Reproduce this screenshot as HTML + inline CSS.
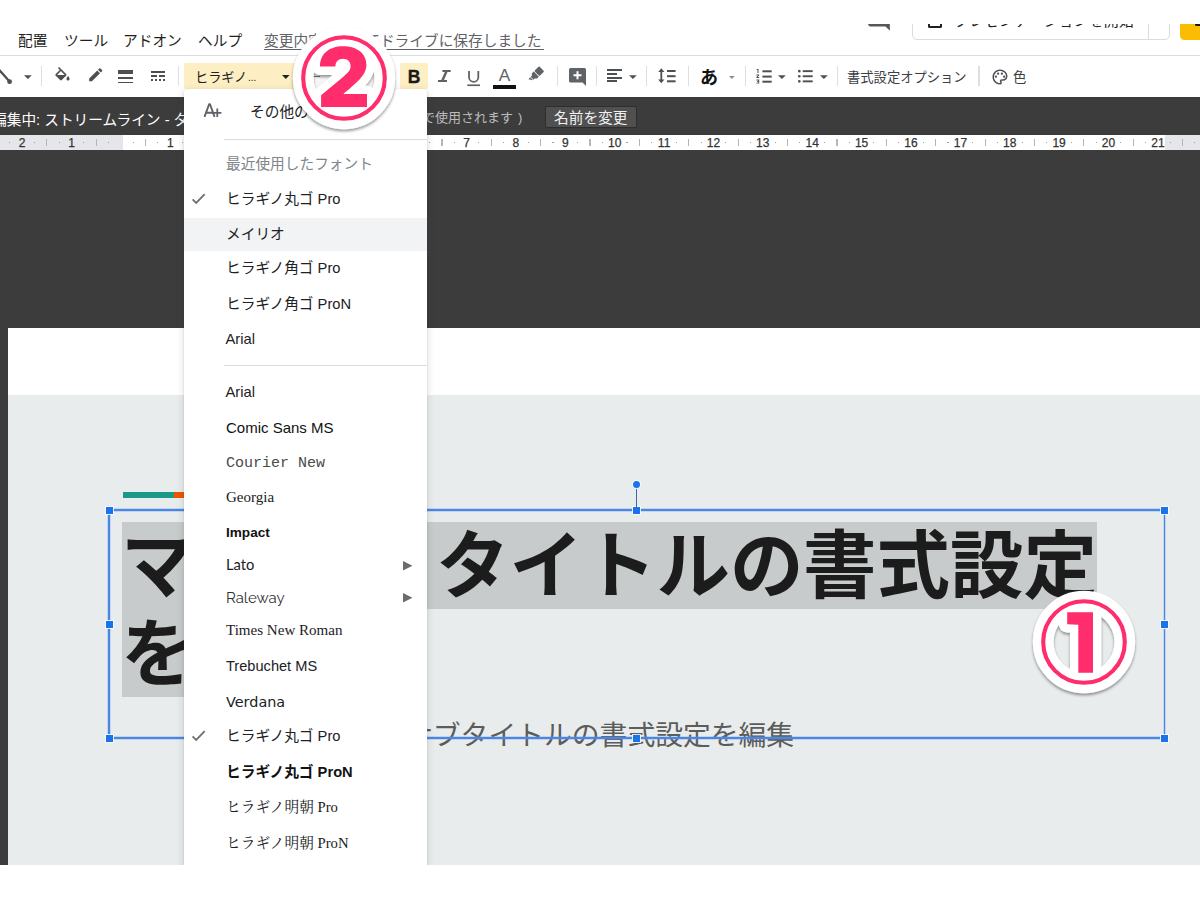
<!DOCTYPE html>
<html lang="ja"><head><meta charset="utf-8"><title>Google Slides - font menu</title>
<style>
html,body{margin:0;padding:0;background:#fff}
body{width:1200px;height:906px;position:relative;overflow:hidden;font-family:"Liberation Sans",sans-serif;color:#202124}
.a{position:absolute}
svg.t{position:absolute;overflow:visible}
svg.t text{font-family:"Liberation Sans","Noto Sans CJK JP",sans-serif;white-space:pre}
svg.i{position:absolute;overflow:visible}
.fi{position:absolute;left:226px;white-space:nowrap;font-size:14.7px;line-height:20px;color:#202124}
.rn{position:absolute;top:135.6px;height:14px;line-height:14px;font-size:12px;color:#333;-webkit-text-stroke:.25px #333;transform:translateX(-50%);white-space:nowrap}
</style></head><body>

<div style="position:absolute;left:0px;top:150px;width:1200px;height:178px;background:#3c3c3c;"></div>
<div style="position:absolute;left:0px;top:328px;width:8px;height:537px;background:#3c3c3c;"></div>
<div style="position:absolute;left:8px;top:328px;width:1192px;height:67px;background:#fff;"></div>
<div style="position:absolute;left:8px;top:394.5px;width:1192px;height:470.5px;background:#e9eced;"></div>
<div style="position:absolute;left:122.5px;top:491.5px;width:51.5px;height:6.5px;background:#1a9988;"></div>
<div style="position:absolute;left:174px;top:491.5px;width:30px;height:6.5px;background:#eb5600;"></div>
<div style="position:absolute;left:121.5px;top:522.3px;width:975.5px;height:87.2px;background:#c8cbcc;"></div>
<div style="position:absolute;left:121.5px;top:609.3px;width:230px;height:87.7px;background:#c8cbcc;"></div>
<svg class="t" style="left:120.8px;top:592px" width="1" height="1"><text x="0" y="0" font-size="73.5" font-weight="bold" fill="#1c1c1c">マスター</text></svg>
<svg class="t" style="left:435.8px;top:592px" width="1" height="1"><text x="0" y="0" font-size="73.5" font-weight="bold" fill="#1c1c1c">タイトルの</text></svg>
<svg class="t" style="left:802.8px;top:592px" width="1" height="1"><text x="0" y="0" font-size="73.5" font-weight="bold" fill="#1c1c1c">書式設定</text></svg>
<svg class="t" style="left:120.8px;top:679.5px" width="1" height="1"><text x="0" y="0" font-size="73.5" font-weight="bold" fill="#1c1c1c">を編集</text></svg>
<svg class="t" style="left:404.9px;top:745px" width="1" height="1"><text x="0" y="0" font-size="27.8" fill="#5c5c5c">サブタイトルの書式設定を編集</text></svg>
<div style="position:absolute;left:109.0px;top:508.35px;width:1055.5px;height:3.5px;background:rgba(90,150,255,.28);"></div><div style="position:absolute;left:109.0px;top:509.3px;width:1055.5px;height:1.6px;background:#4d86dc;"></div>
<div style="position:absolute;left:109.0px;top:736.35px;width:1055.5px;height:3.5px;background:rgba(90,150,255,.28);"></div><div style="position:absolute;left:109.0px;top:737.3px;width:1055.5px;height:1.6px;background:#4d86dc;"></div>
<div style="position:absolute;left:107.25px;top:510.1px;width:3.5px;height:228.0px;background:rgba(90,150,255,.28);"></div><div style="position:absolute;left:108.2px;top:510.1px;width:1.6px;height:228.0px;background:#4d86dc;"></div>
<div style="position:absolute;left:1162.75px;top:510.1px;width:3.5px;height:228.0px;background:rgba(90,150,255,.28);"></div><div style="position:absolute;left:1163.7px;top:510.1px;width:1.6px;height:228.0px;background:#4d86dc;"></div>
<div style="position:absolute;left:105.5px;top:506.6px;width:7.0px;height:7.0px;background:#1a73e8;box-shadow:0 0 0 1px rgba(250,252,255,.85)"></div>
<div style="position:absolute;left:105.5px;top:734.6px;width:7.0px;height:7.0px;background:#1a73e8;box-shadow:0 0 0 1px rgba(250,252,255,.85)"></div>
<div style="position:absolute;left:632.7px;top:506.6px;width:7.0px;height:7.0px;background:#1a73e8;box-shadow:0 0 0 1px rgba(250,252,255,.85)"></div>
<div style="position:absolute;left:632.7px;top:734.6px;width:7.0px;height:7.0px;background:#1a73e8;box-shadow:0 0 0 1px rgba(250,252,255,.85)"></div>
<div style="position:absolute;left:1161.0px;top:506.6px;width:7.0px;height:7.0px;background:#1a73e8;box-shadow:0 0 0 1px rgba(250,252,255,.85)"></div>
<div style="position:absolute;left:1161.0px;top:734.6px;width:7.0px;height:7.0px;background:#1a73e8;box-shadow:0 0 0 1px rgba(250,252,255,.85)"></div>
<div style="position:absolute;left:105.5px;top:620.6px;width:7.0px;height:7.0px;background:#1a73e8;box-shadow:0 0 0 1px rgba(250,252,255,.85)"></div>
<div style="position:absolute;left:1161.0px;top:620.6px;width:7.0px;height:7.0px;background:#1a73e8;box-shadow:0 0 0 1px rgba(250,252,255,.85)"></div>
<div style="position:absolute;left:635.65px;top:487px;width:1.1px;height:20px;background:#3f66b5;"></div>
<div class="a" style="left:632.50px;top:480.800px;width:7.400px;height:7.400px;border-radius:50%;background:#1a73e8;box-shadow:0 0 0 1px rgba(250,252,255,.85)"></div>
<div style="position:absolute;left:0px;top:0px;width:1200px;height:55px;background:#fff;"></div>
<div style="position:absolute;left:0px;top:54.9px;width:1200px;height:1.2px;background:#dadce0;"></div>
<svg class="t" style="left:18.3px;top:46.4px" width="1" height="1"><text x="0" y="0" font-size="14.7" fill="#1f1f1f">配置</text></svg>
<svg class="t" style="left:63.5px;top:46.4px" width="1" height="1"><text x="0" y="0" font-size="14.7" fill="#1f1f1f">ツール</text></svg>
<svg class="t" style="left:122.5px;top:46.4px" width="1" height="1"><text x="0" y="0" font-size="14.7" fill="#1f1f1f">アドオン</text></svg>
<svg class="t" style="left:198px;top:46.4px" width="1" height="1"><text x="0" y="0" font-size="14.7" fill="#1f1f1f">ヘルプ</text></svg>
<svg class="t" style="left:264px;top:46.4px" width="1" height="1"><text x="0" y="0" font-size="14.7" fill="#5f6368">変更内容をすべてドライブに保存しました</text></svg>
<div style="position:absolute;left:264px;top:48.6px;width:280px;height:1px;background:#5f6368;"></div>
<svg class="t" style="left:-12.7px;top:46.4px" width="1" height="1"><text x="0" y="0" font-size="14.7" fill="#1f1f1f">ド</text></svg>
<div class="a" style="left:0;top:24.1px;width:1200px;height:28px;overflow:hidden">
<svg class="i" style="left:866px;top:-16.9px" width="26" height="26" viewBox="0 0 24 24"><path fill="#54585d" d="M20 2H4c-1.100 0-2 .9-2 2v12c0 1.100.9 2 2 2h14l4 4V4c0-1.100-.9-2-2-2z"/></svg>
<div class="a" style="left:912px;top:-23.0px;width:258px;height:38.500px;border:1.200px solid #dadce0;border-radius:5px;box-sizing:border-box;background:#fff"></div>
<div style="position:absolute;left:1148px;top:-23.0px;width:1.2px;height:38px;background:#dadce0;"></div>
<div class="a" style="left:927.500px;top:-9.9px;width:14.800px;height:13.500px;border:2px solid #202124;border-radius:1.500px;box-sizing:border-box"></div>
<svg class="t" style="left:954.3px;top:1.5px" width="1" height="1"><text x="0" y="0" font-size="15" fill="#202124">プレゼンテーションを開始</text></svg>
<div class="a" style="left:1179.500px;top:-22.9px;width:40px;height:38.500px;border-radius:4.500px;background:#fbbc04"></div>
<div class="a" style="left:1195px;top:-10.1px;width:12px;height:12.200px;background:#1b1b1b;border-radius:1.500px"></div>
</div>
<div style="position:absolute;left:0px;top:56.1px;width:1200px;height:40.9px;background:#fff;"></div>
<div style="position:absolute;left:41.099999999999994px;top:65.5px;width:1.4px;height:20.5px;background:#dddfe2;"></div>
<div style="position:absolute;left:177.8px;top:65.5px;width:1.4px;height:20.5px;background:#dddfe2;"></div>
<div style="position:absolute;left:557.0px;top:65.5px;width:1.4px;height:20.5px;background:#dddfe2;"></div>
<div style="position:absolute;left:595.8px;top:65.5px;width:1.4px;height:20.5px;background:#dddfe2;"></div>
<div style="position:absolute;left:646.0999999999999px;top:65.5px;width:1.4px;height:20.5px;background:#dddfe2;"></div>
<div style="position:absolute;left:688.0999999999999px;top:65.5px;width:1.4px;height:20.5px;background:#dddfe2;"></div>
<div style="position:absolute;left:745.0px;top:65.5px;width:1.4px;height:20.5px;background:#dddfe2;"></div>
<div style="position:absolute;left:837.0px;top:65.5px;width:1.4px;height:20.5px;background:#dddfe2;"></div>
<div style="position:absolute;left:978.3px;top:65.5px;width:1.4px;height:20.5px;background:#dddfe2;"></div>
<svg class="i" style="left:0;top:66px" width="14" height="20"><path d="M-2 2.500L9.300 15.300" stroke="#4d5053" stroke-width="2.300" fill="none"/><circle cx="9.600" cy="15.700" r="2.400" fill="#4d5053"/></svg>
<svg class="i" style="left:24.2px;top:75.2px" width="7.8" height="4.3" viewBox="0 0 10 5"><path fill="#4d5053" d="M0 0h10L5 5z"/></svg>
<svg class="i" style="left:53px;top:67.300px" width="19" height="19" viewBox="0 0 24 24"><path fill="#4d5053" d="M16.560 8.940L7.620 0 6.210 1.410l2.380 2.380-5.150 5.150c-.59.590-.59 1.540 0 2.120l5.500 5.500c.29.290.68.440 1.060.440s.77-.15 1.060-.440l5.500-5.500c.59-.58.59-1.530 0-2.120zM5.210 10L10 5.210 14.790 10H5.210zM19 11.500s-2 2.170-2 3.500c0 1.100.9 2 2 2s2-.9 2-2c0-1.330-2-3.500-2-3.500z"/></svg>
<svg class="i" style="left:86.700px;top:66px" width="17.500" height="17.500" viewBox="0 0 24 24"><path fill="#4d5053" d="M3 17.250V21h3.750L17.810 9.940l-3.750-3.750L3 17.250zM20.710 7.040c.39-.39.39-1.020 0-1.410l-2.340-2.340c-.39-.39-1.020-.39-1.410 0l-1.830 1.830 3.750 3.750 1.830-1.830z"/></svg>
<div style="position:absolute;left:117.5px;top:70.3px;width:15.3px;height:4.2px;background:#4d5053;"></div>
<div style="position:absolute;left:117.5px;top:76.8px;width:15.3px;height:2.6px;background:#4d5053;"></div>
<div style="position:absolute;left:117.5px;top:81.7px;width:15.3px;height:1.1px;background:#4d5053;"></div>
<div style="position:absolute;left:150.5px;top:70.8px;width:14.7px;height:2.1px;background:#4d5053;"></div>
<div style="position:absolute;left:150.5px;top:75.3px;width:6.2px;height:2.1px;background:#4d5053;"></div>
<div style="position:absolute;left:159.0px;top:75.3px;width:6.2px;height:2.1px;background:#4d5053;"></div>
<div style="position:absolute;left:150.5px;top:79.4px;width:2.3px;height:2.1px;background:#4d5053;"></div>
<div style="position:absolute;left:154.7px;top:79.4px;width:2.3px;height:2.1px;background:#4d5053;"></div>
<div style="position:absolute;left:158.9px;top:79.4px;width:2.3px;height:2.1px;background:#4d5053;"></div>
<div style="position:absolute;left:163.1px;top:79.4px;width:2.3px;height:2.1px;background:#4d5053;"></div>
<div class="a" style="left:184.2px;top:63px;width:116px;height:25.5px;background:#fdefc3;border-radius:2px"></div>
<svg class="t" style="left:194.6px;top:81.6px" width="1" height="1"><text x="0" y="0" font-size="13.2" fill="#202124">ヒラギノ</text></svg>
<svg class="t" style="left:248.3px;top:81.4px" width="1" height="1"><text x="0" y="0" font-size="10" fill="#202124">...</text></svg>
<svg class="i" style="left:281.7px;top:75.2px" width="7.6" height="4" viewBox="0 0 10 5"><path fill="#202124" d="M0 0h10L5 5z"/></svg>
<div style="position:absolute;left:313px;top:77px;width:11px;height:1.6px;background:#bbb;"></div>
<svg class="i" style="left:363px;top:76.5px" width="7" height="3.6" viewBox="0 0 10 5"><path fill="#999" d="M0 0h10L5 5z"/></svg>
<div class="a" style="left:400px;top:63px;width:28px;height:26px;background:#fdefc3;border-radius:2px"></div>
<div class="a" style="left:406px;top:66.700px;width:16px;height:20px;line-height:20px;font-size:17.500px;font-weight:bold;color:#1a1a1a;-webkit-text-stroke:.35px #1a1a1a;text-align:center">B</div>
<svg class="i" style="left:436px;top:70.400px" width="16" height="13"><path fill="#5f6368" d="M6.400 0h8.300v2H11.500L8 10h3v2H2v-2H5.300L8.800 2H6.400z"/></svg>
<svg class="i" style="left:467px;top:70.700px" width="13" height="16"><path fill="none" stroke="#5f6368" stroke-width="1.800" d="M2 0v6.200a4.650 4.650 0 0 0 9.300 0V0"/><rect x="0.300" y="13.400" width="12.700" height="1.700" fill="#5f6368"/></svg>
<div class="a" style="left:494.400px;top:64.500px;width:20px;height:20px;line-height:20px;font-size:17.300px;color:#5f6368;text-align:center">A</div>
<div style="position:absolute;left:493.3px;top:85.3px;width:22.4px;height:3.4px;background:#111;"></div>
<svg class="i" style="left:526px;top:65px" width="20" height="20"><g fill="#5f6368" transform="translate(10.400 9) rotate(45) scale(.9)"><rect x="-4" y="-8.300" width="8" height="7.600" rx="1"/><path d="M-4 0.200H4V3L2.200 5V6.700H-2.200V5L-4 3z"/><path d="M-2.200 7.500H2.200L-2.200 10.300z"/></g></svg>
<svg class="i" style="left:568.500px;top:67.500px" width="17" height="18"><path fill="#5f6368" d="M1.600 0h13.800A1.600 1.600 0 0 1 17 1.600V18l-3.400-3.400H1.600A1.600 1.600 0 0 1 0 13V1.600A1.600 1.600 0 0 1 1.600 0z"/><path fill="#fff" d="M7.500 3.300h2v3h3v2h-3v3h-2v-3h-3v-2h3z"/></svg>
<div style="position:absolute;left:606.7px;top:69.2px;width:15px;height:2px;background:#4d5053;"></div>
<div style="position:absolute;left:606.7px;top:72.95px;width:10.3px;height:2px;background:#4d5053;"></div>
<div style="position:absolute;left:606.7px;top:76.7px;width:15px;height:2px;background:#4d5053;"></div>
<div style="position:absolute;left:606.7px;top:80.45px;width:10.3px;height:2px;background:#4d5053;"></div>
<svg class="i" style="left:629px;top:75.2px" width="7.8" height="4.3" viewBox="0 0 10 5"><path fill="#4d5053" d="M0 0h10L5 5z"/></svg>
<svg class="i" style="left:657.400px;top:68px" width="21" height="16"><path fill="#4d5053" d="M4.300 0.300L7.400 3.900H5.200v7.700H7.400L4.300 15.200 1.200 11.600H3.400V3.900H1.200z"/><rect x="10" y="2" width="8.600" height="2" fill="#4d5053"/><rect x="10" y="7.200" width="8.600" height="2" fill="#4d5053"/><rect x="10" y="12.300" width="8.600" height="2" fill="#4d5053"/></svg>
<svg class="t" style="left:699.8px;top:84.4px" width="1" height="1"><text x="0" y="0" font-size="18" font-weight="bold" fill="#111">あ</text></svg>
<svg class="i" style="left:729.2px;top:76.3px" width="5.8" height="3" viewBox="0 0 10 5"><path fill="#8a8f94" d="M0 0h10L5 5z"/></svg>
<svg class="i" style="left:756px;top:68.500px" width="16" height="15"><g fill="#4d5053"><rect x="6.400" y="1.300" width="9.300" height="2"/><rect x="6.400" y="6.600" width="9.300" height="2"/><rect x="6.400" y="11.700" width="9.300" height="2"/><path d="M0.700 0h1.800v4H1.500V1H0.700zM0.400 5.400h2.800v.9L1.700 8h1.500v1H0.400v-.9l1.500-1.700H0.400zM0.400 10.600h2.800v4H0.400v-.9h1.800v-.7H1.200v-.9h1v-.6H0.400z"/></g></svg>
<svg class="i" style="left:777.5px;top:75.2px" width="7.8" height="4.3" viewBox="0 0 10 5"><path fill="#4d5053" d="M0 0h10L5 5z"/></svg>
<svg class="i" style="left:798px;top:68.500px" width="16" height="15"><g fill="#4d5053"><rect x="4.700" y="1.200" width="10" height="1.900"/><rect x="4.700" y="6.300" width="10" height="1.900"/><rect x="4.700" y="11.400" width="10" height="1.900"/><circle cx="1.300" cy="2.150" r="1.300"/><circle cx="1.300" cy="7.250" r="1.300"/><circle cx="1.300" cy="12.350" r="1.300"/></g></svg>
<svg class="i" style="left:820px;top:75.2px" width="7.8" height="4.3" viewBox="0 0 10 5"><path fill="#4d5053" d="M0 0h10L5 5z"/></svg>
<svg class="t" style="left:847.1px;top:81.5px" width="1" height="1"><text x="0" y="0" font-size="13.3" fill="#3c4043">書式設定オプション</text></svg>
<svg class="i" style="left:990.500px;top:68.200px" width="18" height="18" viewBox="0 0 24 24"><path fill="#4d5053" d="M12 22C6.490 22 2 17.510 2 12S6.490 2 12 2s10 4.040 10 9c0 3.310-2.690 6-6 6h-1.770c-.28 0-.5.220-.5.500 0 .12.050.23.130.33.410.47.640 1.060.640 1.670A2.500 2.500 0 0 1 12 22zm0-18c-4.410 0-8 3.590-8 8s3.590 8 8 8c.28 0 .5-.22.5-.5a.54.54 0 0 0-.14-.35c-.41-.46-.63-1.050-.63-1.650a2.500 2.500 0 0 1 2.500-2.500H16c2.210 0 4-1.790 4-4 0-3.860-3.590-7-8-7z"/><circle fill="#4d5053" cx="6.500" cy="11.500" r="1.500"/><circle fill="#4d5053" cx="9.500" cy="7.500" r="1.500"/><circle fill="#4d5053" cx="14.500" cy="7.500" r="1.500"/><circle fill="#4d5053" cx="17.500" cy="11.500" r="1.500"/></svg>
<svg class="t" style="left:1012.9px;top:81.5px" width="1" height="1"><text x="0" y="0" font-size="13.3" fill="#3c4043">色</text></svg>
<div style="position:absolute;left:0px;top:97px;width:1200px;height:38.3px;background:#3c3c3c;"></div>
<svg class="t" style="left:-7.7px;top:125.2px" width="1" height="1"><text x="0" y="0" font-size="14.7" fill="#fff">編集中: ストリームライン - タ</text></svg>
<svg class="t" style="left:421.9px;top:121.9px" width="1" height="1"><text x="0" y="0" font-size="13" fill="#bdbdbd">で使用されます</text></svg>
<svg class="t" style="left:517.8px;top:121.9px" width="1" height="1"><text x="0" y="0" font-size="13" fill="#bdbdbd">)</text></svg>
<div class="a" style="left:544.5px;top:105.7px;width:92px;height:22.5px;background:#505050;border:1px solid #2e2e2e;border-radius:2px;box-sizing:border-box"></div>
<svg class="t" style="left:554px;top:122.5px" width="1" height="1"><text x="0" y="0" font-size="14.7" fill="#f1f1f1">名前を変更</text></svg>
<div style="position:absolute;left:0px;top:135.3px;width:1200px;height:14.4px;background:#fff;"></div>
<div style="position:absolute;left:0px;top:135.3px;width:123px;height:14.4px;background:#e4e6ea;"></div>
<div style="position:absolute;left:1164.5px;top:135.3px;width:35.5px;height:14.4px;background:#e4e6ea;"></div>
<div style="position:absolute;left:-3.2px;top:138.8px;width:1.3px;height:7.2px;background:#b4b6ba;"></div>
<div style="position:absolute;left:-15.5px;top:141.8px;width:1.2px;height:1.6px;background:#9aa0a6;"></div>
<div style="position:absolute;left:9.2px;top:141.8px;width:1.2px;height:1.6px;background:#9aa0a6;"></div>
<div class="rn" style="left:22.1px">2</div>
<div style="position:absolute;left:46.2px;top:138.8px;width:1.3px;height:7.2px;background:#b4b6ba;"></div>
<div style="position:absolute;left:33.9px;top:141.8px;width:1.2px;height:1.6px;background:#9aa0a6;"></div>
<div style="position:absolute;left:58.6px;top:141.8px;width:1.2px;height:1.6px;background:#9aa0a6;"></div>
<div class="rn" style="left:71.5px">1</div>
<div style="position:absolute;left:95.6px;top:138.8px;width:1.3px;height:7.2px;background:#b4b6ba;"></div>
<div style="position:absolute;left:83.3px;top:141.8px;width:1.2px;height:1.6px;background:#9aa0a6;"></div>
<div style="position:absolute;left:108.0px;top:141.8px;width:1.2px;height:1.6px;background:#9aa0a6;"></div>
<div style="position:absolute;left:145.0px;top:138.8px;width:1.3px;height:7.2px;background:#b4b6ba;"></div>
<div style="position:absolute;left:132.6px;top:141.8px;width:1.2px;height:1.6px;background:#9aa0a6;"></div>
<div style="position:absolute;left:157.3px;top:141.8px;width:1.2px;height:1.6px;background:#9aa0a6;"></div>
<div class="rn" style="left:170.3px">1</div>
<div style="position:absolute;left:194.4px;top:138.8px;width:1.3px;height:7.2px;background:#b4b6ba;"></div>
<div style="position:absolute;left:182.0px;top:141.8px;width:1.2px;height:1.6px;background:#9aa0a6;"></div>
<div style="position:absolute;left:206.7px;top:141.8px;width:1.2px;height:1.6px;background:#9aa0a6;"></div>
<div class="rn" style="left:219.7px">2</div>
<div style="position:absolute;left:243.8px;top:138.8px;width:1.3px;height:7.2px;background:#b4b6ba;"></div>
<div style="position:absolute;left:231.4px;top:141.8px;width:1.2px;height:1.6px;background:#9aa0a6;"></div>
<div style="position:absolute;left:256.1px;top:141.8px;width:1.2px;height:1.6px;background:#9aa0a6;"></div>
<div class="rn" style="left:269.0px">3</div>
<div style="position:absolute;left:293.1px;top:138.8px;width:1.3px;height:7.2px;background:#b4b6ba;"></div>
<div style="position:absolute;left:280.8px;top:141.8px;width:1.2px;height:1.6px;background:#9aa0a6;"></div>
<div style="position:absolute;left:305.5px;top:141.8px;width:1.2px;height:1.6px;background:#9aa0a6;"></div>
<div class="rn" style="left:318.4px">4</div>
<div style="position:absolute;left:342.5px;top:138.8px;width:1.3px;height:7.2px;background:#b4b6ba;"></div>
<div style="position:absolute;left:330.2px;top:141.8px;width:1.2px;height:1.6px;background:#9aa0a6;"></div>
<div style="position:absolute;left:354.9px;top:141.8px;width:1.2px;height:1.6px;background:#9aa0a6;"></div>
<div class="rn" style="left:367.8px">5</div>
<div style="position:absolute;left:391.9px;top:138.8px;width:1.3px;height:7.2px;background:#b4b6ba;"></div>
<div style="position:absolute;left:379.5px;top:141.8px;width:1.2px;height:1.6px;background:#9aa0a6;"></div>
<div style="position:absolute;left:404.2px;top:141.8px;width:1.2px;height:1.6px;background:#9aa0a6;"></div>
<div class="rn" style="left:417.2px">6</div>
<div style="position:absolute;left:441.3px;top:138.8px;width:1.3px;height:7.2px;background:#b4b6ba;"></div>
<div style="position:absolute;left:428.9px;top:141.8px;width:1.2px;height:1.6px;background:#9aa0a6;"></div>
<div style="position:absolute;left:453.6px;top:141.8px;width:1.2px;height:1.6px;background:#9aa0a6;"></div>
<div class="rn" style="left:466.6px">7</div>
<div style="position:absolute;left:490.7px;top:138.8px;width:1.3px;height:7.2px;background:#b4b6ba;"></div>
<div style="position:absolute;left:478.3px;top:141.8px;width:1.2px;height:1.6px;background:#9aa0a6;"></div>
<div style="position:absolute;left:503.0px;top:141.8px;width:1.2px;height:1.6px;background:#9aa0a6;"></div>
<div class="rn" style="left:515.9px">8</div>
<div style="position:absolute;left:540.0px;top:138.8px;width:1.3px;height:7.2px;background:#b4b6ba;"></div>
<div style="position:absolute;left:527.7px;top:141.8px;width:1.2px;height:1.6px;background:#9aa0a6;"></div>
<div style="position:absolute;left:552.4px;top:141.8px;width:1.2px;height:1.6px;background:#9aa0a6;"></div>
<div class="rn" style="left:565.3px">9</div>
<div style="position:absolute;left:589.4px;top:138.8px;width:1.3px;height:7.2px;background:#b4b6ba;"></div>
<div style="position:absolute;left:577.1px;top:141.8px;width:1.2px;height:1.6px;background:#9aa0a6;"></div>
<div style="position:absolute;left:601.8px;top:141.8px;width:1.2px;height:1.6px;background:#9aa0a6;"></div>
<div class="rn" style="left:614.7px">10</div>
<div style="position:absolute;left:638.8px;top:138.8px;width:1.3px;height:7.2px;background:#b4b6ba;"></div>
<div style="position:absolute;left:626.4px;top:141.8px;width:1.2px;height:1.6px;background:#9aa0a6;"></div>
<div style="position:absolute;left:651.1px;top:141.8px;width:1.2px;height:1.6px;background:#9aa0a6;"></div>
<div class="rn" style="left:664.1px">11</div>
<div style="position:absolute;left:688.2px;top:138.8px;width:1.3px;height:7.2px;background:#b4b6ba;"></div>
<div style="position:absolute;left:675.8px;top:141.8px;width:1.2px;height:1.6px;background:#9aa0a6;"></div>
<div style="position:absolute;left:700.5px;top:141.8px;width:1.2px;height:1.6px;background:#9aa0a6;"></div>
<div class="rn" style="left:713.5px">12</div>
<div style="position:absolute;left:737.6px;top:138.8px;width:1.3px;height:7.2px;background:#b4b6ba;"></div>
<div style="position:absolute;left:725.2px;top:141.8px;width:1.2px;height:1.6px;background:#9aa0a6;"></div>
<div style="position:absolute;left:749.9px;top:141.8px;width:1.2px;height:1.6px;background:#9aa0a6;"></div>
<div class="rn" style="left:762.8px">13</div>
<div style="position:absolute;left:786.9px;top:138.8px;width:1.3px;height:7.2px;background:#b4b6ba;"></div>
<div style="position:absolute;left:774.6px;top:141.8px;width:1.2px;height:1.6px;background:#9aa0a6;"></div>
<div style="position:absolute;left:799.3px;top:141.8px;width:1.2px;height:1.6px;background:#9aa0a6;"></div>
<div class="rn" style="left:812.2px">14</div>
<div style="position:absolute;left:836.3px;top:138.8px;width:1.3px;height:7.2px;background:#b4b6ba;"></div>
<div style="position:absolute;left:824.0px;top:141.8px;width:1.2px;height:1.6px;background:#9aa0a6;"></div>
<div style="position:absolute;left:848.7px;top:141.8px;width:1.2px;height:1.6px;background:#9aa0a6;"></div>
<div class="rn" style="left:861.6px">15</div>
<div style="position:absolute;left:885.7px;top:138.8px;width:1.3px;height:7.2px;background:#b4b6ba;"></div>
<div style="position:absolute;left:873.3px;top:141.8px;width:1.2px;height:1.6px;background:#9aa0a6;"></div>
<div style="position:absolute;left:898.0px;top:141.8px;width:1.2px;height:1.6px;background:#9aa0a6;"></div>
<div class="rn" style="left:911.0px">16</div>
<div style="position:absolute;left:935.1px;top:138.8px;width:1.3px;height:7.2px;background:#b4b6ba;"></div>
<div style="position:absolute;left:922.7px;top:141.8px;width:1.2px;height:1.6px;background:#9aa0a6;"></div>
<div style="position:absolute;left:947.4px;top:141.8px;width:1.2px;height:1.6px;background:#9aa0a6;"></div>
<div class="rn" style="left:960.4px">17</div>
<div style="position:absolute;left:984.5px;top:138.8px;width:1.3px;height:7.2px;background:#b4b6ba;"></div>
<div style="position:absolute;left:972.1px;top:141.8px;width:1.2px;height:1.6px;background:#9aa0a6;"></div>
<div style="position:absolute;left:996.8px;top:141.8px;width:1.2px;height:1.6px;background:#9aa0a6;"></div>
<div class="rn" style="left:1009.7px">18</div>
<div style="position:absolute;left:1033.8px;top:138.8px;width:1.3px;height:7.2px;background:#b4b6ba;"></div>
<div style="position:absolute;left:1021.5px;top:141.8px;width:1.2px;height:1.6px;background:#9aa0a6;"></div>
<div style="position:absolute;left:1046.2px;top:141.8px;width:1.2px;height:1.6px;background:#9aa0a6;"></div>
<div class="rn" style="left:1059.1px">19</div>
<div style="position:absolute;left:1083.2px;top:138.8px;width:1.3px;height:7.2px;background:#b4b6ba;"></div>
<div style="position:absolute;left:1070.9px;top:141.8px;width:1.2px;height:1.6px;background:#9aa0a6;"></div>
<div style="position:absolute;left:1095.6px;top:141.8px;width:1.2px;height:1.6px;background:#9aa0a6;"></div>
<div class="rn" style="left:1108.5px">20</div>
<div style="position:absolute;left:1132.6px;top:138.8px;width:1.3px;height:7.2px;background:#b4b6ba;"></div>
<div style="position:absolute;left:1120.2px;top:141.8px;width:1.2px;height:1.6px;background:#9aa0a6;"></div>
<div style="position:absolute;left:1144.9px;top:141.8px;width:1.2px;height:1.6px;background:#9aa0a6;"></div>
<div class="rn" style="left:1157.9px">21</div>
<div style="position:absolute;left:1182.0px;top:138.8px;width:1.3px;height:7.2px;background:#b4b6ba;"></div>
<div style="position:absolute;left:1169.6px;top:141.8px;width:1.2px;height:1.6px;background:#9aa0a6;"></div>
<div style="position:absolute;left:1194.3px;top:141.8px;width:1.2px;height:1.6px;background:#9aa0a6;"></div>
<div class="a" style="left:184.3px;top:89px;width:242.7px;height:776px;background:#fff;border-radius:4px 4px 0 0;box-shadow:0 2px 6px 2px rgba(60,64,67,.11),0 1px 2px rgba(60,64,67,.22)"></div>
<svg class="i" style="left:203px;top:102px" width="20" height="16"><path fill="none" stroke="#5f6368" stroke-width="1.900" stroke-linejoin="round" d="M1.500 14.900L6.100 2.200H7L11.600 14.900M3.300 10.700H10"/><path fill="none" stroke="#5f6368" stroke-width="1.800" d="M14.300 6.600V15.100M10 10.800H18.400"/></svg>
<svg class="t" style="left:249.6px;top:117.4px" width="1" height="1"><text x="0" y="0" font-size="14.7" fill="#202124">その他のフォント</text></svg>
<div style="position:absolute;left:224px;top:138.5px;width:203px;height:1px;background:#dadce0;"></div>
<svg class="t" style="left:225.8px;top:168.6px" width="1" height="1"><text x="0" y="0" font-size="14.7" fill="#80868b">最近使用したフォント</text></svg>
<div style="position:absolute;left:184.3px;top:218px;width:242.7px;height:33px;background:#f1f3f4;"></div>
<svg class="i" style="left:192.3px;top:193.3px" width="14" height="12"><path fill="none" stroke="#707070" stroke-width="1.800" d="M0.600 6.300L4.200 9.900L12.700 1.200"/></svg>
<svg class="t" style="left:226px;top:204.3px" width="1" height="1"><text x="0" y="0" font-size="14.7" fill="#202124">ヒラギノ丸ゴ Pro</text></svg>
<svg class="t" style="left:226px;top:238.6px" width="1" height="1"><text x="0" y="0" font-size="14.7" fill="#202124">メイリオ</text></svg>
<svg class="t" style="left:226px;top:273.4px" width="1" height="1"><text x="0" y="0" font-size="14.7" fill="#202124">ヒラギノ角ゴ Pro</text></svg>
<svg class="t" style="left:226px;top:309.2px" width="1" height="1"><text x="0" y="0" font-size="14.7" fill="#202124">ヒラギノ角ゴ ProN</text></svg>
<div class="a" style="left:225.5px;top:329.09px;line-height:20px;font-size:14.74px;white-space:nowrap;font-family:'Liberation Sans',sans-serif;color:#202124;">Arial</div>
<div style="position:absolute;left:224px;top:365.2px;width:203px;height:1px;background:#dadce0;"></div>
<div class="a" style="left:225.5px;top:381.59px;line-height:20px;font-size:14.74px;white-space:nowrap;font-family:'Liberation Sans',sans-serif;color:#202124;">Arial</div>
<svg class="t" style="left:226px;top:432.7px" width="1" height="1"><text x="0" y="0" font-size="15" fill="#111" style="font-family:'Comic Sans MS','Liberation Sans',sans-serif">Comic Sans MS</text></svg>
<div class="a" style="left:226px;top:454.30px;line-height:20px;font-size:15px;white-space:nowrap;font-family:'Liberation Mono',monospace;color:#4a4a4a;">Courier New</div>
<svg class="t" style="left:226px;top:501.5px" width="1" height="1"><text x="0" y="0" font-size="15" fill="#202124" style="font-family:Georgia,'Liberation Serif',serif">Georgia</text></svg>
<svg class="t" style="left:226px;top:537.3px" width="1" height="1"><text x="0" y="0" font-size="13.6" font-weight="bold" fill="#111" style="font-family:Impact,'Liberation Sans',sans-serif">Impact</text></svg>
<svg class="t" style="left:226px;top:570.3px" width="1" height="1"><text x="0" y="0" font-size="14.7" fill="#202124" style="font-family:Lato,'Liberation Sans',sans-serif">Lato</text></svg>
<svg class="t" style="left:226px;top:602.5px" width="1" height="1"><text x="0" y="0" font-size="15" fill="#333" style="font-family:Raleway,'Liberation Sans',sans-serif">Raleway</text></svg>
<div class="a" style="left:226px;top:620.12px;line-height:20px;font-size:15.05px;white-space:nowrap;font-family:'Liberation Serif',serif;color:#202124;">Times New Roman</div>
<svg class="t" style="left:226px;top:670.7px" width="1" height="1"><text x="0" y="0" font-size="14.6" fill="#202124" style="font-family:'Trebuchet MS','Liberation Sans',sans-serif">Trebuchet MS</text></svg>
<svg class="t" style="left:226px;top:706.6px" width="1" height="1"><text x="0" y="0" font-size="14.4" fill="#202124" style="font-family:Verdana,'DejaVu Sans','Liberation Sans',sans-serif">Verdana</text></svg>
<svg class="i" style="left:403.300px;top:560.8px" width="10" height="10"><path fill="#6b6b6b" d="M0 0L9.400 4.700L0 9.400z"/></svg>
<svg class="i" style="left:403.300px;top:592.8px" width="10" height="10"><path fill="#6b6b6b" d="M0 0L9.400 4.700L0 9.400z"/></svg>
<svg class="i" style="left:192.3px;top:730.3px" width="14" height="12"><path fill="none" stroke="#707070" stroke-width="1.800" d="M0.600 6.300L4.200 9.900L12.700 1.200"/></svg>
<svg class="t" style="left:226px;top:741.2px" width="1" height="1"><text x="0" y="0" font-size="14.7" fill="#202124">ヒラギノ丸ゴ Pro</text></svg>
<svg class="t" style="left:226px;top:777.3px" width="1" height="1"><text x="0" y="0" font-size="14.7" font-weight="bold" fill="#111">ヒラギノ丸ゴ ProN</text></svg>
<svg class="t" style="left:226px;top:812.2px" width="1" height="1"><text x="0" y="0" font-size="14.7" fill="#202124" style="font-family:'Liberation Serif','Noto Serif CJK SC',serif">ヒラギノ明朝 Pro</text></svg>
<svg class="t" style="left:226px;top:847.6px" width="1" height="1"><text x="0" y="0" font-size="14.7" fill="#202124" style="font-family:'Liberation Serif','Noto Serif CJK SC',serif">ヒラギノ明朝 ProN</text></svg>
<div style="position:absolute;left:0px;top:865px;width:1200px;height:41px;background:#fff;"></div>
<div style="position:absolute;left:308px;top:72.5px;width:72px;height:16.5px;background:#f6f6f6;"></div>
<div style="position:absolute;left:313px;top:75.6px;width:6.5px;height:1.5px;background:#777;"></div>
<svg class="i" style="left:282px;top:16.400000000000006px" width="124" height="128" viewBox="282 16.400000000000006 124 128"><defs><filter id="shb2" x="-20%" y="-20%" width="140%" height="150%"><feGaussianBlur in="SourceAlpha" stdDeviation="1.800"/><feOffset dy="1.600" result="b"/><feComponentTransfer><feFuncA type="linear" slope=".42"/></feComponentTransfer><feMerge><feMergeNode/><feMergeNode in="SourceGraphic"/></feMerge></filter></defs><g filter="url(#shb2)"><circle cx="344" cy="78.4" r="40.8" fill="none" stroke="#fff" stroke-width="20.700000000000003"/><path d="M321.1 107.3H367V94.4H343.7V94L349.3 89.3C363 78 366.4 72.1 366.4 65.2C366.4 54 357.3 46.7 343 46.7C329 46.7 320 54.4 320 67H335.4C335.4 62 338.4 59.2 343 59.2C347.4 59.2 350.6 62 350.6 66.5C350.6 70.8 347.9 73.5 343.4 77.2L321.1 95.7Z" fill="#fff" stroke="#fff" stroke-width="16.6" stroke-linejoin="round"/></g><circle cx="344" cy="78.4" r="40.8" fill="none" stroke="#ff2d6b" stroke-width="4.1"/><path d="M321.1 107.3H367V94.4H343.7V94L349.3 89.3C363 78 366.4 72.1 366.4 65.2C366.4 54 357.3 46.7 343 46.7C329 46.7 320 54.4 320 67H335.4C335.4 62 338.4 59.2 343 59.2C347.4 59.2 350.6 62 350.6 66.5C350.6 70.8 347.9 73.5 343.4 77.2L321.1 95.7Z" fill="#ff2d6b"/></svg>
<svg class="i" style="left:1022.4000000000001px;top:579.6px" width="124" height="128" viewBox="1022.4000000000001 579.6 124 128"><defs><filter id="shb1" x="-20%" y="-20%" width="140%" height="150%"><feGaussianBlur in="SourceAlpha" stdDeviation="1.800"/><feOffset dy="1.600" result="b"/><feComponentTransfer><feFuncA type="linear" slope=".42"/></feComponentTransfer><feMerge><feMergeNode/><feMergeNode in="SourceGraphic"/></feMerge></filter></defs><g filter="url(#shb1)"><circle cx="1084.4" cy="641.6" r="40.8" fill="none" stroke="#fff" stroke-width="20.700000000000003"/><path d="M1067.6 611.9H1093.4V672.4H1078.7V624.3L1067.6 623.8Z" fill="#fff" stroke="#fff" stroke-width="16.6" stroke-linejoin="round"/></g><circle cx="1084.4" cy="641.6" r="40.8" fill="none" stroke="#ff2d6b" stroke-width="4.1"/><path d="M1067.6 611.9H1093.4V672.4H1078.7V624.3L1067.6 623.8Z" fill="#ff2d6b"/></svg>
</body></html>
